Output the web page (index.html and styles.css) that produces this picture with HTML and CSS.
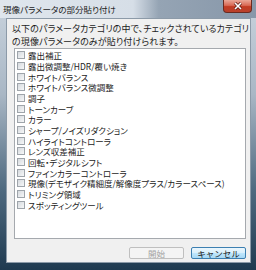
FILE: index.html
```html
<!DOCTYPE html>
<html lang="ja">
<head>
<meta charset="UTF-8" />
<title>現像パラメータの部分貼り付け</title>
<link rel="stylesheet" href="styles.css">
</head>
<body>

<div class="window">
  <div class="titlebar">
    <p>現像パラメータの部分貼り付け</p>
    <div class="close">
      <svg width="10" height="8" viewBox="0 0 10 8">
        <path d="M2 1 L8 7 M8 1 L2 7" stroke="#5a1a12" stroke-width="3" />
        <path d="M2 1 L8 7 M8 1 L2 7" stroke="#fff" stroke-width="1.6" />
      </svg>
    </div>
  </div>

  <div class="client">
    <p class="intro">以下のパラメータカテゴリの中で、チェックされているカテゴリ<br>の現像パラメータのみが貼り付けられます。</p>

    <div class="list" id="list">
      <!-- rows filled in below -->
    </div>

    <div class="actions">
      <button class="btn" disabled>開始</button>
      <button class="btn default">キャンセル</button>
    </div>
  </div>
</div>

<script>
const categories = [
  "露出補正",
  "露出微調整/HDR/覆い焼き",
  "ホワイトバランス",
  "ホワイトバランス微調整",
  "調子",
  "トーンカーブ",
  "カラー",
  "シャープ/ノイズリダクション",
  "ハイライトコントローラ",
  "レンズ収差補正",
  "回転・デジタルシフト",
  "ファインカラーコントローラ",
  "現像(デモザイク精細度/解像度プラス/カラースペース)",
  "トリミング領域",
  "スポッティングツール"
];

const list = document.getElementById("list");
categories.forEach(name => {
  const row = document.createElement("label");
  row.className = "row";
  const box = document.createElement("span");
  box.className = "check";
  const text = document.createElement("span");
  text.textContent = name;
  row.appendChild(box);
  row.appendChild(text);
  list.appendChild(row);
});
</script>

</body>
</html>
```

FILE: styles.css
```css
body {
  margin: 0;
  background-color: #2a4458;
  font-family: "Noto Sans CJK JP", "Noto Sans", sans-serif;
  font-feature-settings: "palt";
  color: #1c1c1c;
}
.window {
  width: 256px;
  height: 270px;
  background: linear-gradient(#c9d3dd 0, #a9b7c5 35%, #4f6a80 70%, #1f3a50 100%);
  overflow: hidden;
}
.titlebar {
  height: 18px;
  display: flex;
  justify-content: space-between;
  background: linear-gradient(to right, #dfe6ed 0, #d6dee7 52%, #95a4b4 62%, #8797a9 100%);
}
.titlebar p {
  margin: 0;
  padding: 3px 0 0 3px;
  font-size: 8.5px;
  line-height: 12px;
  white-space: nowrap;
}
.close {
  width: 27px;
  height: 12px;
  margin-right: 4px;
  display: flex;
  justify-content: center;
  align-items: center;
  background: linear-gradient(#eaa797 0, #d96a55 45%, #c23b22 55%, #b9412c 100%);
  border: 1px solid #6a2a20;
  border-top: none;
  border-radius: 0 0 4px 4px;
}
.client {
  height: 243px;
  margin: 0 5px 0 6px;
  background-color: #f0f0f0;
  border: 1px solid #8c9aa8;
}
.intro {
  margin: 0;
  padding: 3px 0 0 5px;
  font-size: 9px;
  line-height: 13px;
  letter-spacing: 0.1px;
  white-space: nowrap;
}
.list {
  height: 188px;
  margin: 0 4px 0 7px;
  padding-top: 1px;
  background-color: white;
  border: 1px solid #a5a9ae;
}
.row {
  height: 10.67px;
  display: flex;
  align-items: center;
  gap: 3px;
  padding-left: 2px;
  font-size: 8.5px;
  line-height: 10px;
  white-space: nowrap;
}
.check {
  width: 6px;
  height: 6px;
  border: 1px solid #9ea4aa;
  background: linear-gradient(135deg, #d6dade, #f6f7f8);
}
.actions {
  display: flex;
  justify-content: flex-end;
  gap: 7px;
  margin: 8px 4px 0 0;
}
.btn {
  width: 55px;
  height: 12px;
  padding: 0;
  font-family: inherit;
  font-size: 8.5px;
  line-height: 10px;
  color: #1c1c1c;
  border: 1px solid #707070;
  border-radius: 2px;
  background: linear-gradient(#f2f2f2 0, #ebebeb 50%, #dddddd 51%, #cfcfcf 100%);
}
.btn:disabled {
  color: #a3a3a3;
  border-color: #bfbfbf;
  background: #f4f4f4;
}
.btn.default {
  border-color: #3c7fb1;
  background: linear-gradient(#eaf6fd 0, #d9f0fc 50%, #bee6fd 51%, #a7d9f5 100%);
}
```
